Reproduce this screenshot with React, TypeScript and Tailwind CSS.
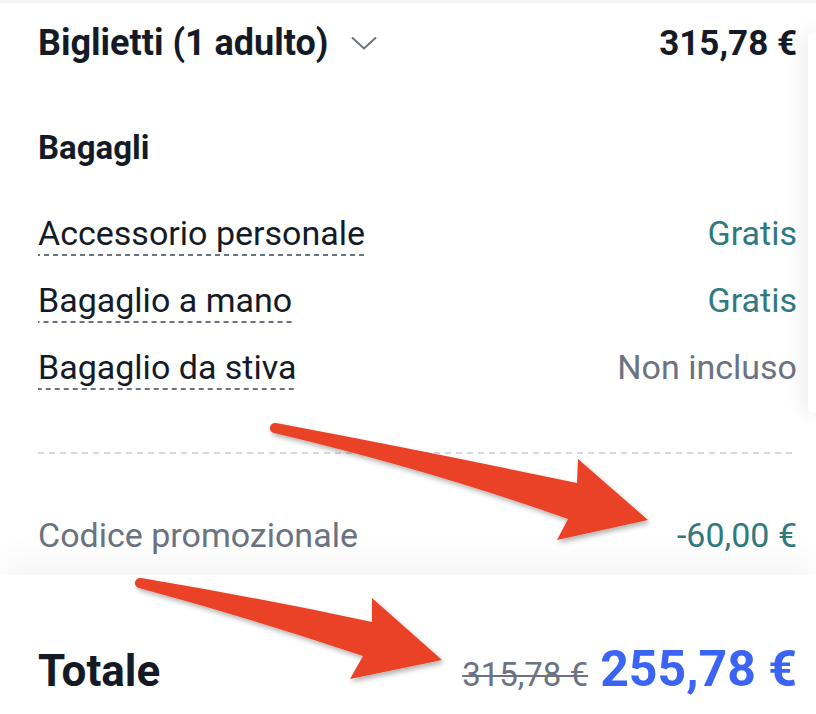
import React from "react";

const dash =
  "bg-[linear-gradient(to_right,#6b7280_5px,transparent_5px)] bg-[length:9px_2px] bg-repeat-x bg-bottom";

function Row({ label, value, valueClass }: { label: string; value: string; valueClass: string }) {
  return (
    <div className="flex items-baseline justify-between">
      <span className={`inline-block leading-[40px] pb-[3px] text-[34px] text-[#151b26] ${dash}`}>{label}</span>
      <span className={`leading-[40px] text-[34px] ${valueClass}`}>{value}</span>
    </div>
  );
}

export default function App() {
  return (
    <div
      className="relative w-[816px] h-[714px] overflow-hidden bg-white"
      style={{ fontFamily: "Roboto, 'Noto Sans', sans-serif" }}
    >
      <div className="h-[3px] bg-[#f2f3f5]" />
      <div className="pl-[38px] pr-[19px] pt-[18px] pb-[20px]">
        <div className="flex items-baseline justify-between">
          <div className="flex items-center">
            <span className="text-[36px] leading-[44px] font-bold text-[#151b26]">Biglietti (1 adulto)</span>
            <svg className="ml-[23px]" width="26" height="14" viewBox="0 0 26 14" fill="none">
              <path d="M1 1.5 L13 12.5 L25 1.5" stroke="#6b7280" strokeWidth="2" />
            </svg>
          </div>
          <span className="text-[35px] leading-[44px] font-bold text-[#151b26]">315,78 €</span>
        </div>

        <div className="mt-[62px] text-[33px] leading-[40px] font-bold text-[#151b26]">Bagagli</div>

        <div className="mt-[45px] flex flex-col gap-[24px]">
          <Row label="Accessorio personale" value="Gratis" valueClass="text-[#2f7a80]" />
          <Row label="Bagaglio a mano" value="Gratis" valueClass="text-[#2f7a80]" />
          <Row label="Bagaglio da stiva" value="Non incluso" valueClass="text-[#6b7280]" />
        </div>

        <div className="mt-[62px] h-[2px] bg-[linear-gradient(to_right,#d6d8dd_6px,transparent_6px)] bg-[length:11px_2px] bg-repeat-x" />

        <div className="mt-[61px] flex items-baseline justify-between">
          <span className="text-[34px] leading-[40px] text-[#6b7280]">Codice promozionale</span>
          <span className="text-[34px] leading-[40px] text-[#2f7a80]">-60,00 €</span>
        </div>
      </div>

      <div className="relative bg-white shadow-[0_-18px_30px_rgba(0,0,0,0.035)] pl-[38px] pr-[19px] pt-[66px] h-[200px]">
        <div className="flex items-baseline justify-between">
          <span className="text-[44px] leading-[56px] font-bold text-[#151b26]">Totale</span>
          <div className="flex items-baseline">
            <span className="text-[33px] leading-[40px] text-[#6b7280] line-through decoration-2 mr-[12px]">315,78 €</span>
            <span className="text-[50px] leading-[56px] font-bold text-[#3b64f5]">255,78 €</span>
          </div>
        </div>
      </div>

      <div className="absolute left-[808px] top-[32px] w-[24px] h-[381px] bg-white rounded-[6px] shadow-[-6px_0_18px_rgba(0,0,0,0.07)]" />

      <svg className="absolute left-0 top-0 pointer-events-none" width="816" height="714" viewBox="0 0 816 714">
        <defs>
          <filter id="ds" x="-10%" y="-10%" width="130%" height="140%">
            <feDropShadow dx="2" dy="3" stdDeviation="2.5" floodColor="#000" floodOpacity="0.3" />
          </filter>
        </defs>
        <g fill="#ea4227" filter="url(#ds)">
          <path d="M276 423 Q430 452 577 483 L578 459 L648 520 L557 540 L568 519 Q430 470 274 433 A5 5 0 0 1 276 423 Z" />
          <path d="M141 578 Q260 598 372 622 L372 598 L442 660 L350 679 L363 656 Q250 618 139 588 A5 5 0 0 1 141 578 Z" />
        </g>
      </svg>
    </div>
  );
}
